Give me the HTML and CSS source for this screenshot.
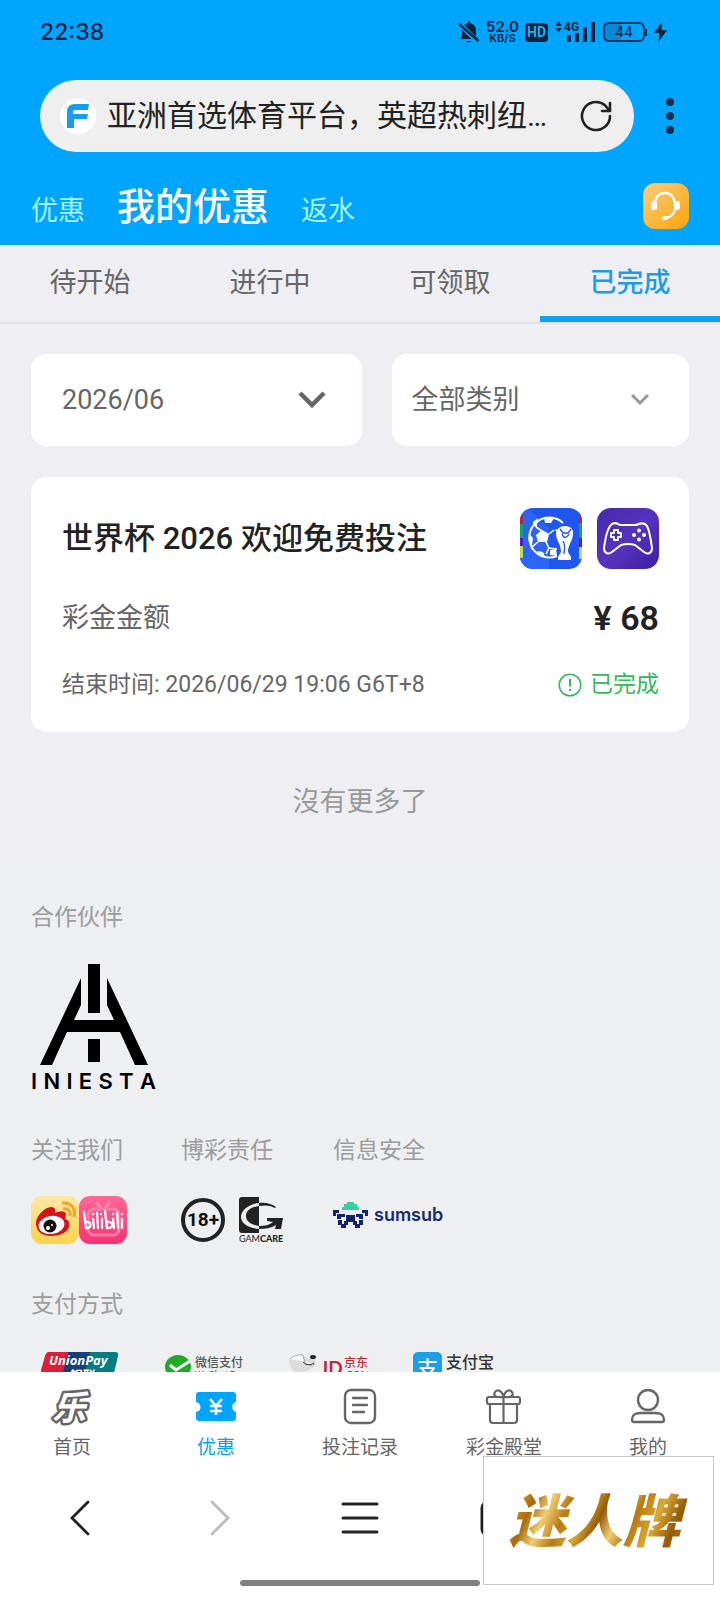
FILE: index.html
```html
<!DOCTYPE html>
<html lang="zh-CN">
<head>
<meta charset="utf-8">
<meta name="viewport" content="width=device-width, initial-scale=1">
<title>我的优惠</title>
<link rel="stylesheet" href="styles.css">
</head>
<body>
<div class="app">
  <header class="header">
    <div class="status">
      <time class="clock">22:38</time>
      <div class="status-icons">
        <svg width="22" height="24" viewBox="0 0 22 24" aria-hidden="true"><path d="M10 1h2v2c4 1 6 4 6 8v5l2 3H2l2-3v-5c0-4 2-7 6-8zM8.500 21h5q-2.500 3-5 0z" fill="#06243f"/><path d="M0 2.500 20 22" stroke="#00a5ff" stroke-width="5"/><path d="M1 4 20.500 21" stroke="#06243f" stroke-width="2.400"/></svg>
        <div class="speed"><span class="speed-num">52.0</span><span class="speed-unit">KB/S</span></div>
        <span class="hd">HD</span>
        <svg width="42" height="24" viewBox="0 0 42 24" fill="#06243f" aria-hidden="true"><path d="M1 6 4.500 1.500 8 6zM1 8 4.500 12 8 8z"/><path d="M13 15h4v7h-4zM21 13h4v9h-4zM29 7h4v15h-4zM37 2h4v20h-4z"/><text x="10" y="11" font-size="12" font-weight="700" font-family="Roboto">4G</text></svg>
        <svg width="46" height="22" viewBox="0 0 46 22" aria-hidden="true"><path d="M5 2h14v18H5q-3 0-3-3V5q0-3 3-3z" fill="#0689d6"/><rect x="2" y="2" width="40" height="18" rx="5" fill="none" stroke="#06355c" stroke-width="2"/><path d="M44 8v7" stroke="#06355c" stroke-width="2"/><text x="22" y="16" text-anchor="middle" font-size="14" font-family="Inter" fill="#06243f">44</text></svg>
        <svg width="13" height="22" viewBox="0 0 13 22" aria-hidden="true"><path d="M8 1 0 12h5.500L4.500 21 13 9H7.500z" fill="#06243f"/></svg>
      </div>
    </div>
    <div class="browser">
      <div class="address">
        <svg class="favicon" viewBox="0 0 36 36" aria-hidden="true"><circle cx="18" cy="18" r="18" fill="#fff"/><path d="M7 30V14q0-8 8-8h14l-1 6H15q-2 0-2 2v2h15l-1 5H14v9z" fill="#159df0"/></svg>
        <span class="page-title">亚洲首选体育平台，英超热刺纽…</span>
        <button class="plain" aria-label="刷新"><svg width="34" height="34" viewBox="0 0 34 34" fill="none" stroke="#222" stroke-width="2.600" stroke-linecap="round" stroke-linejoin="round"><path d="M31 17a14 14 0 1 1-5-10.700L31 12M31 4v8h-8"/></svg></button>
      </div>
      <button class="plain" aria-label="菜单"><svg width="10" height="38" viewBox="0 0 10 38" fill="#143047"><circle cx="5" cy="5" r="4"/><circle cx="5" cy="19" r="4"/><circle cx="5" cy="33" r="4"/></svg></button>
    </div>
    <nav class="sections">
      <a href="#promo">优惠</a>
      <a href="#mine" class="current">我的优惠</a>
      <a href="#rebate">返水</a>
      <button class="plain support" aria-label="客服"><svg width="46" height="46" viewBox="0 0 46 46"><defs><linearGradient id="sup" x1="0" y1="0" x2="1" y2="1"><stop offset="0" stop-color="#fbcd7b"/><stop offset="1" stop-color="#fba40c"/></linearGradient></defs><rect width="46" height="46" rx="12" fill="url(#sup)"/><path d="M12 21C12 13 17 10 22.500 10S32 15 32 21C33 29 29 34 23 35" fill="none" stroke="#fff" stroke-width="2.400"/><rect x="8" y="18" width="6" height="9" rx="3" fill="#fff"/><rect x="31" y="18" width="6" height="9" rx="3" fill="#fff"/><ellipse cx="22" cy="35" rx="3" ry="2" fill="#fff"/></svg></button>
    </nav>
  </header>

  <main class="content">
    <nav class="tabs">
      <a href="#pending">待开始</a>
      <a href="#running">进行中</a>
      <a href="#claimable">可领取</a>
      <a href="#done" class="current">已完成</a>
    </nav>
    <div class="filters">
      <div class="filter month">
        <select aria-label="月份"><option>2026/06</option></select>
        <svg width="28" height="18" viewBox="0 0 28 18" fill="none" stroke="#666" stroke-width="4.500"><path d="M2 2 14 14 26 2"/></svg>
      </div>
      <div class="filter kind">
        <select aria-label="类别"><option>全部类别</option></select>
        <svg width="20" height="14" viewBox="0 0 20 14" fill="none" stroke="#999" stroke-width="3"><path d="M2 2 10 10 18 2"/></svg>
      </div>
    </div>

    <article class="card">
      <div class="row">
        <h1 class="card-title">世界杯 2026 欢迎免费投注</h1>
        <div class="badges">
          <svg width="62" height="61" viewBox="0 0 62 61" aria-hidden="true"><defs><clipPath id="cup"><rect width="62" height="61" rx="13"/></clipPath></defs><g clip-path="url(#cup)"><path d="M0 0h62v61H0z" fill="#1f56ee"/><path d="M0 0h8l21 21v40H0z" fill="#2b64f6"/><path d="M0 7h3v9H0zM59 5h3v10h-3z" fill="#c31f3d"/><path d="M0 16h3v14H0zM59 15h3v15h-3z" fill="#10a36b"/><path d="M0 30h3v8H0zM59 30h3v9h-3z" fill="#5a15cf"/><path d="M0 38h3v12H0zM59 39h3v12h-3z" fill="#b6e33e"/></g><path d="M43 15A20 20 0 1 0 37 48" fill="none" stroke="#fff" stroke-width="2"/><path d="M22 23 16 19M29 26l5-4M26 34l3 6M18 34l-5 4M35 22l7 1M29 40l8 1M13 38l-2 3M16 19v-4M29 40l-3 6" fill="none" stroke="#fff" stroke-width="1.600"/><path d="m22 22 7 4-2 8h-9l-2-7zM24 9l10 1-3 5h-6zM13 14l5-4-1 7-4 2zM9 26l4 4-1 7-3-2zM17 43l6 1 2 5-5-1zM30 42l6-1 1 7-7-1z" fill="#fff"/><path d="M45 18c6 0 9 4 8 9-1 7-5 10-5 17l3 5v3H38v-3l3-5c0-8-5-12-5-18 0-5 4-8 9-8z" fill="#fff"/><path d="m40 21 3 4h5l3-4M42 26q3 7 7 0M43 33c3 5 1 9 1 13" stroke="#1f56ee" stroke-width="1.300" fill="none"/></svg>
          <svg width="62" height="61" viewBox="0 0 62 61" aria-hidden="true"><defs><linearGradient id="pad" x1="0" y1="0" x2="1" y2="1"><stop stop-color="#432aaa"/><stop offset=".5" stop-color="#5733bd"/><stop offset="1" stop-color="#3b20a0"/></linearGradient></defs><rect width="62" height="61" rx="14" fill="url(#pad)"/><g fill="none" stroke="#fff" stroke-width="2" stroke-linejoin="round"><path d="M13 18c3-4 7-3 10-1h16c4-2 8-3 11 1 3 6 4 15 5 22 0 5-4 7-8 4l-9-7q-7-2-14 0l-9 7c-4 3-8 1-8-4 1-7 2-16 6-22z"/><path d="M17 22h4v3h3v4h-3v3h-4v-3h-3v-4h3z" stroke-width="1.800"/></g><g fill="#fff"><circle cx="42" cy="22.500" r="2"/><circle cx="42" cy="31.500" r="2"/><circle cx="37" cy="27" r="2"/><circle cx="47" cy="27" r="2"/></g></svg>
        </div>
      </div>
      <div class="row amount"><span class="amount-label">彩金金额</span><strong>¥ 68</strong></div>
      <div class="row meta">
        <span>结束时间: 2026/06/29 19:06 G6T+8</span>
        <span class="done"><svg width="24" height="24" viewBox="0 0 24 24" aria-hidden="true"><circle cx="12" cy="12" r="10.800" fill="none" stroke="#35b85c" stroke-width="1.500"/><path d="M12 6v7.500M12 16v2" stroke="#35b85c" stroke-width="2"/></svg>已完成</span>
      </div>
    </article>
    <p class="end">沒有更多了</p>

    <footer class="footer">
      <h2>合作伙伴</h2>
      <div class="iniesta">
        <svg width="108" height="101" viewBox="0 0 108 101" aria-hidden="true"><path d="M48 0h12v49H48zM48 75h12v23H48zM0 101 41 14v27l-7 15h40l-7-15V14l41 87H95L80 68H27L12 101z"/></svg>
        <span class="iniesta-name"><b>I</b><b>N</b><b>I</b><b>E</b><b>S</b><b>T</b><b>A</b></span>
      </div>
      <div class="groups">
        <section>
          <h2>关注我们</h2>
          <div class="logos">
            <svg width="48" height="48" viewBox="0 0 48 48" role="img" aria-label="微博"><defs><linearGradient id="wb" x2="0" y2="1"><stop stop-color="#fce8a5"/><stop offset="1" stop-color="#fbd34f"/></linearGradient></defs><rect width="48" height="48" rx="11" fill="url(#wb)"/><path d="M5 27c0-7 9-16 15-16 4 0 5 3 4 6 4-2 10-3 11 1l-1 5c4 1 5 4 4 8-2 6-10 9-18 9C11 40 5 35 5 27z" fill="#d6111a"/><ellipse cx="20.500" cy="29" rx="13" ry="9" fill="#fff" transform="rotate(-8 20 29)"/><circle cx="19" cy="30" r="6.500" fill="#111"/><circle cx="17" cy="32" r="2" fill="#fff"/><circle cx="21" cy="29" r="1" fill="#fff"/><path d="M32 13c5-1 8 2 7 7M31 7c9-1 14 5 12 14" fill="none" stroke="#eda52c" stroke-width="3"/></svg>
            <svg width="48" height="48" viewBox="0 0 48 48" role="img" aria-label="bilibili"><defs><linearGradient id="bl" x2="0" y2="1"><stop stop-color="#ff6896"/><stop offset="1" stop-color="#f83075"/></linearGradient></defs><rect width="48" height="48" rx="11" fill="url(#bl)"/><path d="m17 6 5 6M31 6l-5 6" stroke="#fd8bad" stroke-width="3"/><rect x="9" y="13" width="31" height="26" rx="6" fill="none" stroke="#fd7da4" stroke-width="3"/><g fill="none" stroke="#fff" stroke-width="2.300" stroke-linecap="round"><path d="m5 16 2 16c6 0 6-7 0-6M14 23l1 9M14 18v.2M18 17l1 15M23 23v9M22 18v.2M26 15l2 17c7 0 7-7 0-6M34 23l1 9M34 18v.2M38 17l1 15M43 23v9M43 18v.2"/></g></svg>
          </div>
        </section>
        <section>
          <h2>博彩责任</h2>
          <div class="logos spaced">
            <span class="adult">18+</span>
            <span class="gamcare">
              <svg width="44" height="36" viewBox="0 0 44 36" aria-hidden="true"><path d="M0 3q0-3 3-3h17v36H3q-3 0-3-3z" fill="#222"/><path d="M20 6C10 7 2 13 2 20s8 11 18 12v-3C13 28 7 25 7 19s6-9 13-10z" fill="#eceef0"/><path d="M20 6c7-1 13 1 17 4l-1 1c-5-3-10-3-16-2zM28 21h16l-2 11h-6l1-4c-5 3-11 4-17 4v-3c6 0 10-1 14-4l-6-1z" fill="#222"/></svg>
              <span class="gamcare-name">GAM<b>CARE</b></span>
            </span>
          </div>
        </section>
        <section>
          <h2>信息安全</h2>
          <div class="logos sumsub">
            <svg width="35" height="27" viewBox="0 0 35 27" aria-hidden="true"><path d="M14 0h7v2h3v3h2v3H9V5h2V2h3z" fill="#36cfa6"/><path d="M0 8h6v3H3v3H0zM29 8h6v6h-3v-3h-3zM4 12h8v3H8v2H4zM23 12h7v5h-4v-2h-3zM13 13h9v6h2v4h-4v-3h-5v3h-4v-4h2zM5 18h4v4h4v4H8v-3H5zM26 18h4v5h-3v3h-5v-4h4z" fill="#12236e"/></svg>
            <span class="sumsub-name">sumsub</span>
          </div>
        </section>
      </div>
      <h2>支付方式</h2>
      <div class="payments">
        <svg width="78" height="48" viewBox="0 0 78 48" role="img" aria-label="UnionPay"><path d="M8 2h20L17 48H-8L4 6q1-4 4-4z" fill="#dc1f3c"/><path d="M27 2h26L42 48H16z" fill="#173f79"/><path d="M49 2h25q4 0 3 4l-9 38q-1 4-4 4H38z" fill="#067c82"/><text x="8" y="15" font-family="Open Sans" font-size="13" font-weight="700" font-style="italic" fill="#fff">UnionPay</text><text x="29" y="30" font-family="Noto Sans CJK SC" font-size="13" font-weight="700" fill="#fff">银联</text></svg>
        <svg width="80" height="48" viewBox="0 0 80 48" role="img" aria-label="微信支付"><ellipse cx="14" cy="17" rx="13" ry="12" fill="#20ac25"/><path d="m6 15 6 5 14-9" fill="none" stroke="#fff" stroke-width="3"/><text x="31" y="17" font-family="Noto Sans CJK SC" font-size="12" font-weight="500" fill="#555">微信支付</text><text x="31" y="27" font-family="Liberation Sans" font-size="9" fill="#555">WeChat Pay</text></svg>
        <svg width="80" height="48" viewBox="0 0 80 48" role="img" aria-label="京东"><path d="M1 10q5-5 14-4l6 3 6-3 1 10-8 4-4 8-14 2 5-8Q2 19 1 10z" fill="#dcdcdc"/><path d="M2 9q5-5 13-4l2 8q5 4 10 1" fill="#f7f7f7" stroke="#aaa"/><ellipse cx="25" cy="7" rx="3" ry="2" fill="#222"/><path d="M15 12q5 5 11 1" stroke="#333" fill="none"/><text x="32" y="25" font-family="Lato" font-size="19" font-weight="700" fill="#bd2935">JD</text><text x="56" y="17" font-family="Noto Sans CJK SC" font-size="12" font-weight="500" fill="#bd2935">京东</text><text x="56" y="28" font-family="Lato" font-size="10" font-weight="700" fill="#bd2935">.COM</text></svg>
        <svg width="78" height="48" viewBox="0 0 78 48" class="wide-mark" role="img" aria-label="支付宝"><rect y="2" width="29" height="30" rx="5" fill="#1c9fe4"/><text x="4" y="26" font-family="Noto Sans CJK SC" font-size="21" font-weight="500" fill="#fff">支</text><text x="33" y="18" font-family="Noto Sans CJK SC" font-size="16" font-weight="500" fill="#333">支付宝</text><text x="33" y="31" font-family="Liberation Sans" font-size="11" fill="#666">ALIPAY</text></svg>
      </div>
    </footer>
  </main>

  <nav class="tabbar">
    <a href="#home"><svg width="42" height="42" viewBox="0 0 42 42" class="wide-mark" aria-hidden="true"><text x="18" y="34" text-anchor="middle" class="home-glyph">乐</text></svg>首页</a>
    <a href="#promo" class="current"><svg width="42" height="42" viewBox="0 0 42 42" aria-hidden="true"><path d="M4 6h34q3 0 3 3v7c-5 1-5 9 0 10v6q0 3-3 3H4q-3 0-3-3v-6c6-1 6-9 0-10V9q0-3 3-3z" fill="#00a5ff"/><path d="m15 13 6 7 6-7M15 20h12M15 25h12M21 20v9" stroke="#fff" stroke-width="2.600" fill="none"/></svg>优惠</a>
    <a href="#bets"><svg width="42" height="42" viewBox="0 0 42 42" fill="none" stroke="#666" stroke-width="2.400" stroke-linecap="round" aria-hidden="true"><rect x="6" y="4" width="30" height="33" rx="6"/><path d="M14 12h14M14 19h14M14 26h11"/></svg>投注记录</a>
    <a href="#bonus"><svg width="42" height="42" viewBox="0 0 42 42" fill="none" stroke="#666" stroke-width="2.200" stroke-linejoin="round" aria-hidden="true"><rect x="4" y="11" width="33" height="7" rx="2"/><path d="M7 18v16q0 3 3 3h21q3 0 3-3V18M20.500 11v26M20.500 11C12 12 10 9 12 6s7-2 8.500 5C22 4 27 3 29 6s0 6-8.500 5"/></svg>彩金殿堂</a>
    <a href="#me"><svg width="42" height="42" viewBox="0 0 42 42" fill="none" stroke="#666" stroke-width="2.400" aria-hidden="true"><circle cx="21" cy="14" r="10"/><path d="M5 34c0-6 4-7 9-7h14c5 0 9 1 9 7q0 2-2 2H7q-2 0-2-2z"/></svg>我的</a>
  </nav>
  <div class="browser-bar">
    <button class="plain" aria-label="后退"><svg width="40" height="40" viewBox="0 0 40 40" fill="none" stroke="#222" stroke-width="2.800" stroke-linecap="round"><path d="M28 4 12 20 28 36"/></svg></button>
    <button class="plain" aria-label="前进"><svg width="40" height="40" viewBox="0 0 40 40" fill="none" stroke="#bbb" stroke-width="2.800" stroke-linecap="round"><path d="M12 4 28 20 12 36"/></svg></button>
    <button class="plain" aria-label="工具"><svg width="40" height="40" viewBox="0 0 40 40" fill="none" stroke="#222" stroke-width="3" stroke-linecap="round"><path d="M3 6h34M3 20h34M3 34h34"/></svg></button>
    <button class="plain" aria-label="标签页"><svg width="40" height="40" viewBox="0 0 40 40" fill="none" stroke="#222" stroke-width="3"><rect x="2" y="4" width="36" height="33" rx="6"/></svg></button>
    <button class="plain" aria-label="主页"><svg width="40" height="40" viewBox="0 0 40 40" fill="none" stroke="#222" stroke-width="3"><path d="M5 18 20 5l15 13v18H5z"/></svg></button>
  </div>
  <div class="gesture"></div>
  <div class="stamp"><span>迷人牌</span></div>
</div>
</body>
</html>
```
FILE: styles.css
```css
* { box-sizing: border-box; }

body {
  margin: 0;
  background: #fff;
  color: #666;
  font-family: Roboto, "Noto Sans CJK SC", sans-serif;
}

h1, h2, p { margin: 0; font-weight: 400; }
a { color: inherit; text-decoration: none; }
svg { display: block; flex: none; }
.wide-mark { overflow: visible; }

.plain {
  display: flex;
  padding: 0;
  border: 0;
  background: none;
}

.app {
  position: relative;
  display: flex;
  flex-direction: column;
  height: 100vh;
}

/* Header */
.header { background: #00a5ff; color: #a8f4ff; }

.status {
  display: flex;
  align-items: center;
  justify-content: space-between;
  height: 64px;
  padding: 0 53px 0 40px;
  color: #06243f;
}

.clock { font-family: Inter, sans-serif; font-size: 23px; line-height: 32px; font-weight: 500; }
.status-icons { display: flex; align-items: center; gap: 6px; }
.speed { display: flex; flex-direction: column; align-items: center; font-weight: 600; font-family: Inter, sans-serif; }
.speed-num { font-size: 15px; line-height: 13px; }
.speed-unit { font-size: 11px; line-height: 11px; }

.hd {
  padding: 0 2px;
  border-radius: 4px;
  background: #06243f;
  color: #2ba9f0;
  font-size: 14px;
  line-height: 19px;
  font-weight: 700;
}

.browser {
  display: flex;
  align-items: center;
  gap: 31px;
  padding: 16px 45px 0 40px;
}

.address {
  display: flex;
  flex: 1;
  align-items: center;
  min-width: 0;
  height: 72px;
  padding: 0 21px 0 20px;
  border-radius: 36px;
  background: #efefef;
  color: #222;
}

.favicon { width: 36px; height: 36px; margin-right: 11px; }

.page-title {
  flex: 1;
  min-width: 0;
  overflow: hidden;
  font-size: 30px;
  line-height: 44px;
  text-overflow: ellipsis;
  white-space: nowrap;
}

.sections {
  display: flex;
  align-items: baseline;
  gap: 32px;
  padding: 28px 31px 7px;
  font-size: 27px;
  line-height: 54px;
}

.sections .current { color: #fff; font-size: 38px; font-weight: 500; }
.support { align-self: flex-start; margin: 3px 0 0 auto; }

/* Content */
.content {
  flex: 1;
  min-height: 0;
  overflow-y: auto;
  scrollbar-width: none;
  background: #efeef3;
}

.tabs {
  display: flex;
  height: 79px;
  border-bottom: 2px solid #e2e2e7;
}

.tabs a {
  flex: 1;
  border-bottom: 6px solid transparent;
  font-size: 27px;
  line-height: 77px;
  text-align: center;
}

.tabs .current { border-color: #0fa2f2; color: #1b9ce8; font-weight: 500; }

.filters { display: flex; gap: 30px; padding: 30px 31px 31px; }

.filter {
  display: grid;
  align-items: center;
  height: 92px;
  border-radius: 15px;
  background: #fff;
}

.filter > * { grid-area: 1 / 1; }
.filter svg { justify-self: end; pointer-events: none; }
.month { flex: 10; }
.kind { flex: 9; }
.month svg { margin-right: 36px; }
.kind svg { margin-right: 39px; }

.filter select {
  width: 100%;
  height: 92px;
  padding: 0 31px;
  border: 0;
  background: none;
  color: #666;
  font: inherit;
  font-size: 27px;
  appearance: none;
}

.kind select { padding: 0 20px; }

.card {
  display: flex;
  flex-direction: column;
  margin: 0 31px;
  padding: 31px 30px 31px 31px;
  border-radius: 16px;
  background: #fff;
}

.row { display: flex; align-items: center; justify-content: space-between; }
.card-title { color: #222; font-size: 31px; line-height: 44px; font-weight: 500; }
.badges { display: flex; gap: 15px; }
.amount { margin-top: 28px; font-size: 27px; line-height: 42px; }
.amount strong { color: #222; font-size: 34px; font-weight: 600; line-height: 40px; }
.meta { margin-top: 30px; font-size: 23px; line-height: 32px; }
.done { display: flex; align-items: center; gap: 8px; color: #35b85c; }

.end {
  padding: 50px 31px 37px;
  color: #999;
  font-size: 27px;
  line-height: 40px;
  text-align: center;
}

/* Footer */
.footer {
  padding: 43px 31px 60px;
  background: #edeff1;
}

.footer h2 { color: #9c9c9c; font-size: 23px; line-height: 32px; }

.iniesta {
  display: flex;
  flex-direction: column;
  align-items: center;
  width: 125px;
  margin: 30px 0 40px;
  color: #000;
}

.iniesta-name {
  display: flex;
  align-self: stretch;
  justify-content: space-between;
  margin-top: 2px;
  font-family: Inter, sans-serif;
  font-size: 22px;
  line-height: 28px;
}

.iniesta-name b { font-weight: 600; }

.groups {
  display: grid;
  grid-template-columns: 96px 98px auto;
  gap: 54px;
  margin-bottom: 45px;
}

.logos {
  display: flex;
  align-items: center;
  height: 48px;
  margin-top: 29px;
}

.spaced { gap: 14px; }

.adult {
  flex: none;
  width: 44px;
  height: 44px;
  border: 4px solid #222;
  border-radius: 50%;
  color: #111;
  font-size: 19px;
  line-height: 36px;
  font-weight: 700;
  text-align: center;
}

.gamcare-name { display: block; color: #222; font-family: Lato, sans-serif; font-size: 9px; line-height: 11px; }
.gamcare-name b { font-weight: 900; }
.sumsub { gap: 6px; padding-bottom: 10px; }
.sumsub-name { color: #172b70; font-family: Inter, sans-serif; font-size: 18px; line-height: 24px; font-weight: 600; }

.payments {
  display: grid;
  grid-template-columns: repeat(auto-fill, 98px);
  gap: 26px;
  justify-items: center;
  margin-top: 29px;
}

/* Bottom bars */
.tabbar {
  display: flex;
  z-index: 1;
  height: 100px;
  padding-top: 14px;
  background: #fff;
}

.tabbar a {
  display: flex;
  flex: 1;
  flex-direction: column;
  align-items: center;
  gap: 8px;
  font-size: 19px;
  line-height: 24px;
}

.tabbar .current { color: #0a9ff2; }

.home-glyph {
  fill: #fff;
  stroke: #666;
  stroke-width: 5px;
  stroke-linejoin: round;
  paint-order: stroke;
  font-size: 34px;
  font-style: italic;
  font-weight: 700;
}

.browser-bar {
  display: flex;
  align-items: center;
  height: 92px;
  padding: 0 10px;
}

.browser-bar .plain { flex: 1; justify-content: center; }

.gesture {
  width: 33.33%;
  height: 6px;
  margin: 16px auto 14px;
  border-radius: 3px;
  background: #808080;
}

/* Stamp lying over the bottom bars */
.stamp {
  position: absolute;
  z-index: 2;
  right: 6px;
  bottom: 15px;
  display: flex;
  align-items: center;
  justify-content: center;
  width: 231px;
  height: 129px;
  border: 1px solid #c8c8c8;
  background: #fff;
}

.stamp span {
  padding: 4px 8px 0 0;
  background: linear-gradient(115deg, #9a5c08, #d89a22 8%, #a96a0c 16%, #f0cd74 24%, #b87a12 33%, #dba836 42%, #945a0a 50%, #f0cd74 58%, #b87a12 66%, #dba836 76%, #945a0a 86%, #d09830);
  background-clip: text;
  color: transparent;
  font-size: 57px;
  font-style: italic;
  font-weight: 900;
  line-height: 80px;
}
```
